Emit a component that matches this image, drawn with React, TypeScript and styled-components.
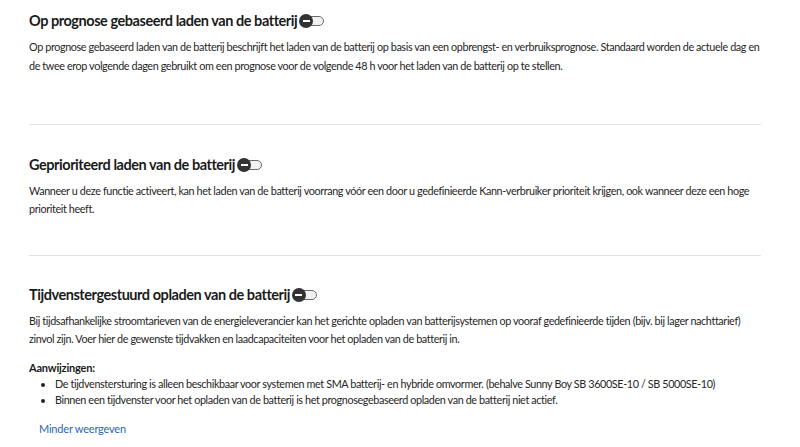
import * as React from "react";
import styled, { createGlobalStyle } from "styled-components";

const GlobalStyle = createGlobalStyle`
  html, body {
    margin: 0;
    padding: 0;
    background: #ffffff;
  }
  body {
    font-family: Lato, "Open Sans", Arial, sans-serif;
    color: #222222;
  }
`;

const PageStyled = styled.main`
  width: 732px;
  padding: 0 0 0 29px;
`;

const SectionStyled = styled.section<{ $top: number; $bottom: number; $last?: boolean }>`
  padding-top: ${(p) => p.$top}px;
  padding-bottom: ${(p) => p.$bottom}px;
  border-bottom: ${(p) => (p.$last ? "none" : "1px solid #e2e2e2")};
`;

const TitleRowStyled = styled.h2`
  display: flex;
  align-items: center;
  gap: 2px;
  margin: 0;
  font-size: 14.5px;
  font-weight: 700;
  letter-spacing: -0.45px;
  line-height: 20px;
  color: #1b1b1b;
`;

const BodyStyled = styled.p<{ $lineHeight?: number }>`
  margin: 7px 0 0;
  font-size: 10.8px;
  letter-spacing: -0.38px;
  line-height: ${(p) => p.$lineHeight ?? 18.5}px;
  color: #262626;
`;

const NoteTitleStyled = styled.p`
  margin: 13px 0 0;
  font-size: 11px;
  font-weight: 700;
  letter-spacing: -0.2px;
  line-height: 16px;
  color: #1b1b1b;
`;

const NoteListStyled = styled.ul`
  margin: 0;
  padding: 0 0 0 26px;
  font-size: 10.8px;
  letter-spacing: -0.38px;
  line-height: 16px;
  color: #262626;
`;

const LinkStyled = styled.a`
  display: inline-block;
  margin: 13px 0 0 10px;
  font-size: 11px;
  letter-spacing: -0.2px;
  line-height: 16px;
  color: #2b66b8;
  text-decoration: none;
  cursor: pointer;
`;

const ToggleStyled = styled.span`
  position: relative;
  display: inline-flex;
  align-items: center;
  width: 25px;
  height: 14px;
  flex: none;
`;

const TrackStyled = styled.span`
  position: absolute;
  left: 5px;
  top: 2px;
  width: 18px;
  height: 8px;
  border: 1.5px solid #6b6b6b;
  border-radius: 6px;
  background: #f1f1f1;
`;

const KnobStyled = styled.span`
  position: absolute;
  left: 0;
  top: 0;
  width: 14px;
  height: 14px;
  border-radius: 50%;
  background: #333333;
  &::after {
    content: "";
    position: absolute;
    left: 3.5px;
    top: 6px;
    width: 7px;
    height: 2px;
    background: #ffffff;
  }
`;

function Toggle() {
  return (
    <ToggleStyled role="switch" aria-checked={false}>
      <TrackStyled />
      <KnobStyled />
    </ToggleStyled>
  );
}

export default function App() {
  return (
    <PageStyled>
      <GlobalStyle />
      <SectionStyled $top={11} $bottom={49}>
        <TitleRowStyled>
          Op prognose gebaseerd laden van de batterij <Toggle />
        </TitleRowStyled>
        <BodyStyled>
          Op prognose gebaseerd laden van de batterij beschrijft het laden van de batterij op basis van een opbrengst- en
          verbruiksprognose. Standaard worden de actuele dag en de twee erop volgende dagen gebruikt om een prognose voor
          de volgende 48 h voor het laden van de batterij op te stellen.
        </BodyStyled>
      </SectionStyled>
      <SectionStyled $top={30} $bottom={37}>
        <TitleRowStyled>
          Geprioriteerd laden van de batterij <Toggle />
        </TitleRowStyled>
        <BodyStyled $lineHeight={18}>
          Wanneer u deze functie activeert, kan het laden van de batterij voorrang vóór een door u gedefinieerde
          Kann-verbruiker prioriteit krijgen, ook wanneer deze een hoge prioriteit heeft.
        </BodyStyled>
      </SectionStyled>
      <SectionStyled $top={29} $bottom={8} $last>
        <TitleRowStyled>
          Tijdvenstergestuurd opladen van de batterij <Toggle />
        </TitleRowStyled>
        <BodyStyled $lineHeight={17.5}>
          Bij tijdsafhankelijke stroomtarieven van de energieleverancier kan het gerichte opladen van batterijsystemen op
          vooraf gedefinieerde tijden (bijv. bij lager nachttarief) zinvol zijn. Voer hier de gewenste tijdvakken en
          laadcapaciteiten voor het opladen van de batterij in.
        </BodyStyled>
        <NoteTitleStyled>Aanwijzingen:</NoteTitleStyled>
        <NoteListStyled>
          <li>
            De tijdvenstersturing is alleen beschikbaar voor systemen met SMA batterij- en hybride omvormer. (behalve
            Sunny Boy SB 3600SE-10 / SB 5000SE-10)
          </li>
          <li>Binnen een tijdvenster voor het opladen van de batterij is het prognosegebaseerd opladen van de batterij niet actief.</li>
        </NoteListStyled>
        <LinkStyled>Minder weergeven</LinkStyled>
      </SectionStyled>
    </PageStyled>
  );
}
